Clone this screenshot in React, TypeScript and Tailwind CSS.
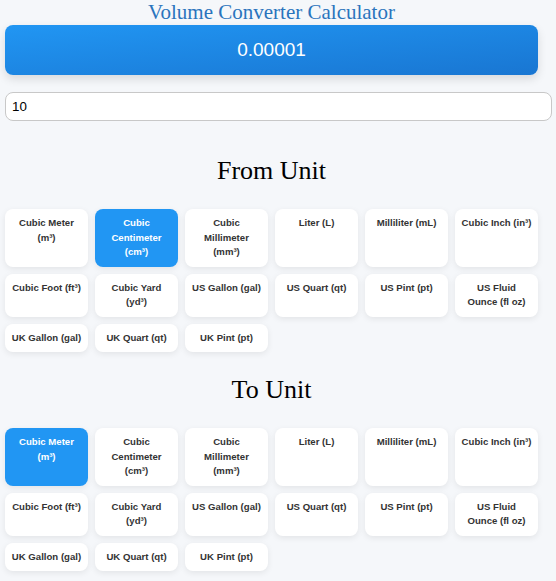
import React, { useState } from 'react';

const UNITS = [
  { id: 'm3', name: 'Cubic Meter (m³)', factor: 1 },
  { id: 'cm3', name: 'Cubic Centimeter (cm³)', factor: 1e-6 },
  { id: 'mm3', name: 'Cubic Millimeter (mm³)', factor: 1e-9 },
  { id: 'l', name: 'Liter (L)', factor: 1e-3 },
  { id: 'ml', name: 'Milliliter (mL)', factor: 1e-6 },
  { id: 'in3', name: 'Cubic Inch (in³)', factor: 1.6387064e-5 },
  { id: 'ft3', name: 'Cubic Foot (ft³)', factor: 0.028316846592 },
  { id: 'yd3', name: 'Cubic Yard (yd³)', factor: 0.764554857984 },
  { id: 'usgal', name: 'US Gallon (gal)', factor: 0.003785411784 },
  { id: 'usqt', name: 'US Quart (qt)', factor: 0.000946352946 },
  { id: 'uspt', name: 'US Pint (pt)', factor: 0.000473176473 },
  { id: 'usfloz', name: 'US Fluid Ounce (fl oz)', factor: 2.95735295625e-5 },
  { id: 'ukgal', name: 'UK Gallon (gal)', factor: 0.00454609 },
  { id: 'ukqt', name: 'UK Quart (qt)', factor: 0.0011365225 },
  { id: 'ukpt', name: 'UK Pint (pt)', factor: 0.00056826125 },
];

function UnitGrid({ selected, onSelect }: { selected: string; onSelect: (id: string) => void }) {
  return (
    <div className="grid grid-cols-6 gap-[7px]">
      {UNITS.map((u) => {
        const active = u.id === selected;
        return (
          <button
            key={u.id}
            onClick={() => onSelect(u.id)}
            className={`flex flex-col items-center justify-start rounded-[8px] px-[6px] py-[7px] text-center font-bold text-[9.6px] leading-[14.5px] shadow-[0_2px_6px_rgba(0,0,0,0.08)] ${
              active ? 'bg-[#2196f3] text-white' : 'bg-white text-[#333]'
            }`}
          >
            <span className="block w-full">{u.name}</span>
          </button>
        );
      })}
    </div>
  );
}

export default function App() {
  const [value, setValue] = useState('10');
  const [from, setFrom] = useState('cm3');
  const [to, setTo] = useState('m3');

  const f = UNITS.find((u) => u.id === from)!;
  const t = UNITS.find((u) => u.id === to)!;
  const num = parseFloat(value);
  const result = isNaN(num) ? '' : String(parseFloat(((num * f.factor) / t.factor).toPrecision(10)));

  return (
    <div className="min-h-screen bg-[#f5f7fa] font-['Liberation_Sans',Arial,sans-serif]">
      <div className="w-[533px] ml-[5px]">
        <h1 className="m-0 text-center font-['Liberation_Serif','Times_New_Roman',serif] text-[21px] leading-[25px] text-[#2a74bd]">
          Volume Converter Calculator
        </h1>
        <div className="h-[50px] rounded-[8px] bg-gradient-to-br from-[#2196f3] to-[#1976d2] shadow-[0_4px_10px_rgba(0,0,0,0.12)] flex items-center justify-center text-white text-[19px]">
          {result}
        </div>
        <input
          type="text"
          value={value}
          onChange={(e) => setValue(e.target.value)}
          className="mt-[17px] box-content w-full h-[15px] px-[6px] py-[6px] border border-[#c8c8c8] rounded-[8px] bg-white text-[13.33px] text-black outline-none"
        />
        <h2 className="mt-[35px] mb-[23px] text-center font-['Liberation_Serif','Times_New_Roman',serif] text-[26px] leading-[30px] text-black">
          From Unit
        </h2>
        <UnitGrid selected={from} onSelect={setFrom} />
        <h2 className="mt-[23px] mb-[23px] text-center font-['Liberation_Serif','Times_New_Roman',serif] text-[26px] leading-[30px] text-black">
          To Unit
        </h2>
        <UnitGrid selected={to} onSelect={setTo} />
      </div>
    </div>
  );
}
